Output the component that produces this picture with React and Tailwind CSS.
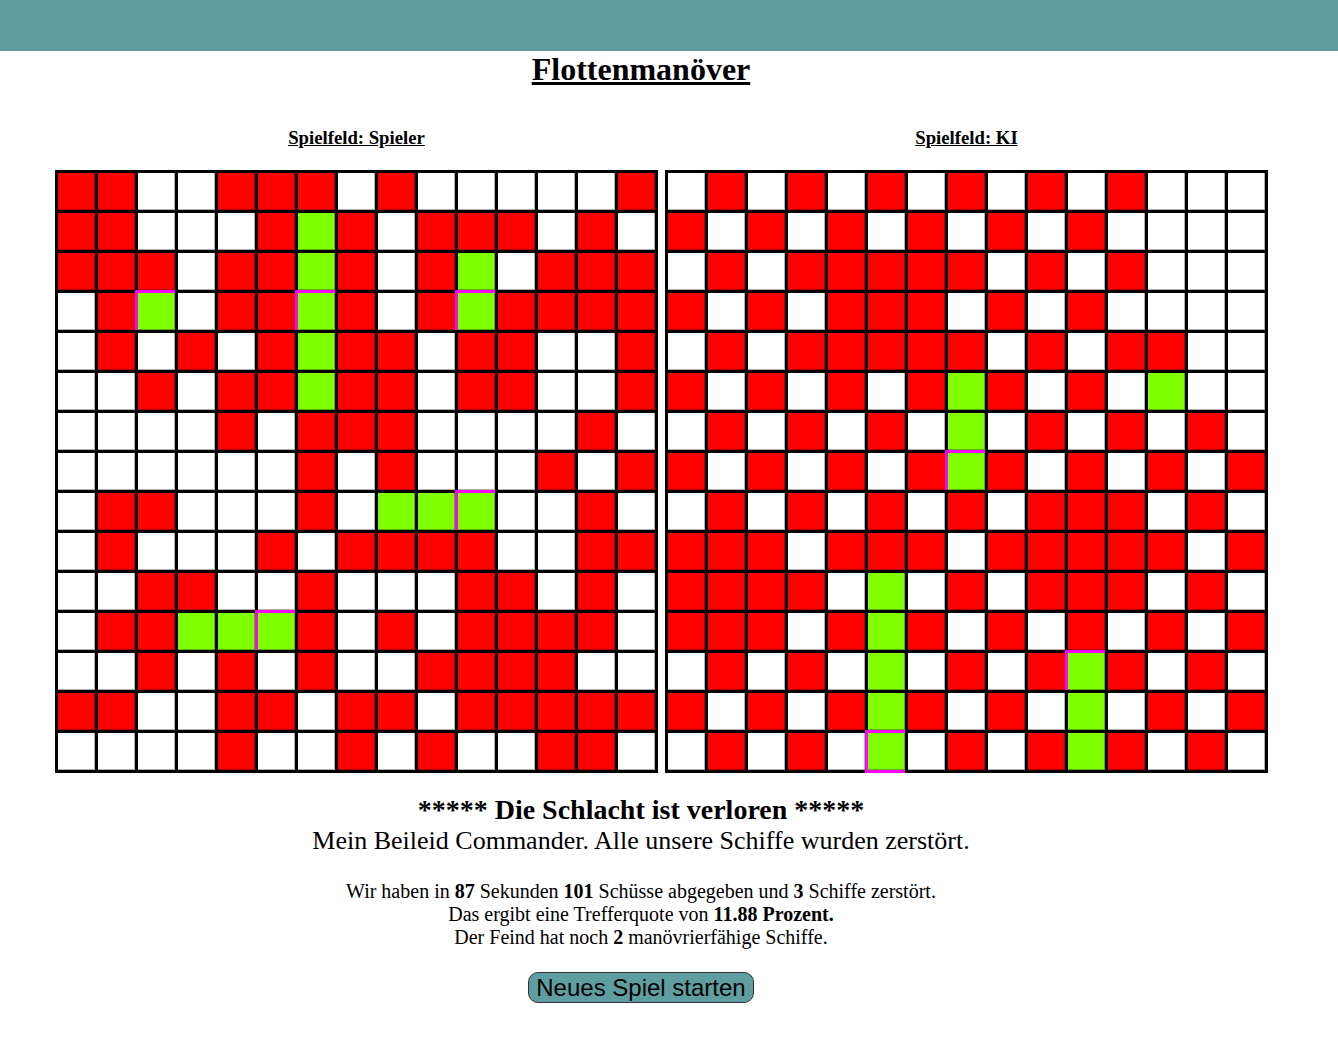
import React from 'react';

// R = Treffer daneben (rot), W = Wasser, G = Schiff getroffen, M = letzter Treffer
const playerBoard = [
  'RRWWRRRWRWWWWWR',
  'RRWWWRGRWRRRWRW',
  'RRRWRRGRWRGWRRR',
  'WRMWRRMRWRMRRRR',
  'WRWRWRGRRWRRWWR',
  'WWRWRRGRRWRRWWR',
  'WWWWRWRRRWWWWRW',
  'WWWWWWRWRWWWRWR',
  'WRRWWWRWGGMWWRW',
  'WRWWWRWRRRRWWRR',
  'WWRRWWRWWWRRWRW',
  'WRRGGMRWRWRRRRW',
  'WWRWRWRWWRRRRWW',
  'RRWWRRWRRWRRRRR',
  'WWWWRWWRWRWWRRW',
];

const aiBoard = [
  'WRWRWRWRWRWRWWW',
  'RWRWRWRWRWRWWWW',
  'WRWRRRRRWRWRWWW',
  'RWRWRRRWRWRWWWW',
  'WRWRRRRRWRWRRWW',
  'RWRWRWRGRWRWGWW',
  'WRWRWRWGWRWRWRW',
  'RWRWRWRMRWRWRWR',
  'WRWRWRWRWRRRWRW',
  'RRRWRRRWRRRRRWR',
  'RRRRWGWRWRRRWRW',
  'RRRWRGRWRWRWRWR',
  'WRWRWGWRWRMRWRW',
  'RWRWRGRWRWGWRWR',
  'WRWRWMWRWRGRWRW',
];

const cellColor = {
  R: 'bg-[#ff0000]',
  W: 'bg-white',
  G: 'bg-[#7fff00]',
  M: 'bg-[#7fff00]',
};

const Cell = ({ type, lastRow }) => (
  <div className={`relative w-[37px] h-[37px] border-r border-b border-black/30 ${cellColor[type]}`}>
    {type === 'M' && (
      <div
        className={
          lastRow
            ? 'absolute -top-[3px] -left-[3px] w-[40px] h-[43px] border-t-[3px] border-l-[3px] border-b-[3px] border-[#ff00ff]'
            : 'absolute -top-[3px] -left-[3px] w-[40px] h-[40px] border-t-[3px] border-l-[3px] border-[#ff00ff]'
        }
      />
    )}
  </div>
);

const Board = ({ title, rows }) => (
  <div className="flex flex-col items-center">
    <h3 className="text-[18.72px] leading-[22px] font-bold underline mb-[21px]">{title}</h3>
    <div className="grid grid-cols-[repeat(15,37px)] gap-[3px] p-[3px] bg-black">
      {rows.map((row, r) =>
        row.split('').map((type, c) => <Cell key={`${r}-${c}`} type={type} lastRow={r === rows.length - 1} />)
      )}
    </div>
  </div>
);

export default function App() {
  return (
    <div className="w-[1338px] min-h-[1038px] bg-white text-black font-['Liberation_Serif',serif]">
      <div className="h-[51px] bg-[#5f9ea0]" />
      <div className="w-[1282px] flex flex-col items-center">
        <h1 className="mt-[2px] text-[32px] leading-[32px] font-bold underline">Flottenmanöver</h1>
      </div>

      <div className="flex gap-[7px] pl-[55px] mt-[42px]">
        <Board title="Spielfeld: Spieler" rows={playerBoard} />
        <Board title="Spielfeld: KI" rows={aiBoard} />
      </div>

      <div className="w-[1282px] flex flex-col items-center text-center mt-[21px]">
        <h2 className="text-[28px] leading-[32px] font-bold">***** Die Schlacht ist verloren *****</h2>
        <p className="text-[26px] leading-[30px]">Mein Beileid Commander. Alle unsere Schiffe wurden zerstört.</p>

        <div className="mt-[24px] text-[20px] leading-[23px]">
          <p>
            Wir haben in <b>87</b> Sekunden <b>101</b> Schüsse abgegeben und <b>3</b> Schiffe zerstört.
          </p>
          <p>
            Das ergibt eine Trefferquote von <b>11.88 Prozent.</b>
          </p>
          <p>
            Der Feind hat noch <b>2</b> manövrierfähige Schiffe.
          </p>
        </div>

        <button className="mt-[23px] h-[31px] px-[7px] rounded-[10px] border border-[#333] bg-[#5f9ea0] text-[24px] leading-[26px] font-['Liberation_Sans',sans-serif] text-black">
          Neues Spiel starten
        </button>
      </div>
    </div>
  );
}
